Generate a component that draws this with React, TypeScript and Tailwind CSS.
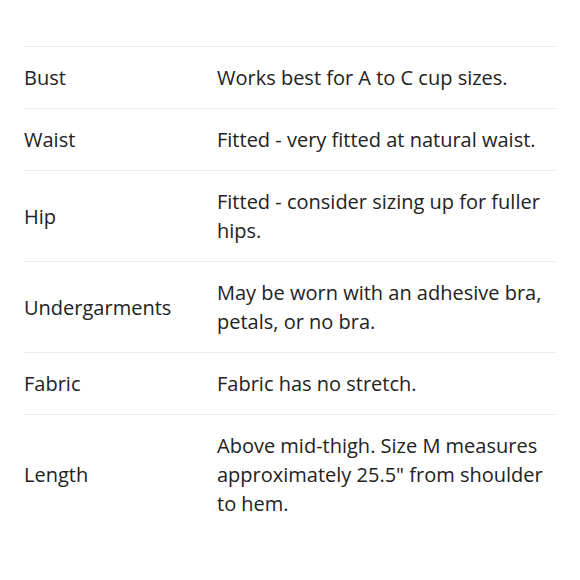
const rows: {label: string; value: string}[] = [
  {label: 'Bust', value: 'Works best for A to C cup sizes.'},
  {label: 'Waist', value: 'Fitted - very fitted at natural waist.'},
  {label: 'Hip', value: 'Fitted - consider sizing up for fuller hips.'},
  {label: 'Undergarments', value: 'May be worn with an adhesive bra, petals, or no bra.'},
  {label: 'Fabric', value: 'Fabric has no stretch.'},
  {label: 'Length', value: 'Above mid-thigh. Size M measures approximately 25.5" from shoulder to hem.'},
];

export default function App() {
  return (
    <div className="min-h-[580px] bg-white px-6 pt-[46px] font-['Open_Sans',sans-serif] text-[20px] leading-[29px] text-[#222]">
      <dl className="flex flex-col">
        {rows.map(({label, value}) => (
          <div className="flex items-center border-t border-[#ececec] py-4" key={label}>
            <dt className="w-[193px] shrink-0">{label}</dt>
            <dd className="w-[335px]">{value}</dd>
          </div>
        ))}
      </dl>
    </div>
  );
}
